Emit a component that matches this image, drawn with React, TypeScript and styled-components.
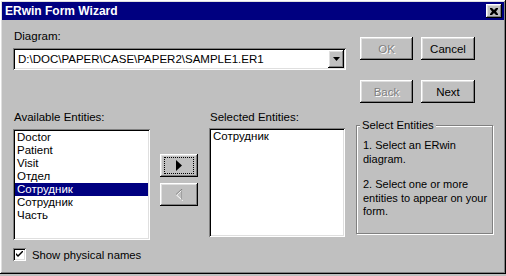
import React from 'react';
import styled, { createGlobalStyle, css } from 'styled-components';

const GlobalStyle = createGlobalStyle`
  html, body {
    margin: 0;
    padding: 0;
    background: #c0c0c0;
  }
  body {
    font-family: "Liberation Sans", Arial, sans-serif;
    font-size: 11px;
    color: #000;
  }
`;

const raised = css`
  box-shadow: inset -1px -1px #000, inset 1px 1px #fff, inset -2px -2px #808080,
    inset 2px 2px #dfdfdf;
`;

const sunken = css`
  box-shadow: inset 1px 1px #808080, inset -1px -1px #fff, inset 2px 2px #000,
    inset -2px -2px #dfdfdf;
`;

const Window = styled.div`
  width: 506px;
  height: 274px;
  box-sizing: border-box;
  background: #c0c0c0;
  padding: 2px;
  display: flex;
  flex-direction: column;
  ${raised};
`;

const TitleBar = styled.div`
  height: 18px;
  background: #000080;
  color: #fff;
  font-weight: bold;
  font-size: 12px;
  display: flex;
  align-items: center;
  justify-content: space-between;
  padding: 0 2px 0 3px;
`;

const CloseButton = styled.div`
  width: 16px;
  height: 14px;
  background: #c0c0c0;
  color: #000;
  display: flex;
  align-items: center;
  justify-content: center;
  ${raised};
`;

const Body = styled.div`
  flex: 1;
  padding: 0 0 0 11px;
  display: flex;
  flex-direction: column;
`;

const TopRow = styled.div`
  display: flex;
  gap: 14px;
`;

const DiagramBlock = styled.div`
  width: 333px;
  padding-top: 10px;
  display: flex;
  flex-direction: column;
`;

const Label = styled.div`
  height: 13px;
  line-height: 13px;
  font-size: 11.5px;
  margin-bottom: 5px;
  margin-left: 1px;
`;

const Combo = styled.div`
  height: 22px;
  background: #fff;
  display: flex;
  align-items: center;
  justify-content: space-between;
  padding: 0 2px 0 5px;
  box-sizing: border-box;
  font-size: 11.5px;
  ${sunken};
`;

const DropButton = styled.div`
  width: 16px;
  height: 18px;
  background: #c0c0c0;
  display: flex;
  align-items: center;
  justify-content: center;
  ${raised};
`;

const ButtonGrid = styled.div`
  display: grid;
  grid-template-columns: 53px 54px;
  grid-template-rows: 23px 23px;
  column-gap: 8px;
  row-gap: 20px;
  padding-top: 17px;
`;

const Button = styled.div<{ $disabled?: boolean }>`
  background: #c0c0c0;
  display: flex;
  align-items: center;
  justify-content: center;
  font-size: 11.5px;
  ${raised};
  color: ${(p) => (p.$disabled ? '#808080' : '#000')};
  text-shadow: ${(p) => (p.$disabled ? '1px 1px #fff' : 'none')};
`;

const MiddleRow = styled.div`
  display: grid;
  grid-template-columns: 137px 37px 136px 137px;
  column-gap: 11px;
  margin-top: 8px;
  align-items: start;
`;

const Column = styled.div`
  display: flex;
  flex-direction: column;
`;

const ListBox = styled.div<{ $height: number; $lift?: boolean }>`
  height: ${(p) => p.$height}px;
  margin-top: ${(p) => (p.$lift ? -1 : 0)}px;
  background: #fff;
  box-sizing: border-box;
  padding: 2px;
  ${sunken};
`;

const ListItem = styled.div<{ $selected?: boolean }>`
  height: 13px;
  line-height: 13px;
  padding-left: 2px;
  font-size: 11.5px;
  background: ${(p) => (p.$selected ? '#000080' : 'transparent')};
  color: ${(p) => (p.$selected ? '#fff' : '#000')};
`;

const ArrowColumn = styled.div`
  display: flex;
  flex-direction: column;
  gap: 6px;
  padding-top: 43px;
  margin-left: -1px;
`;

const ArrowButton = styled.div`
  height: 23px;
  background: #c0c0c0;
  display: flex;
  align-items: center;
  justify-content: center;
  position: relative;
  ${raised};
`;

const FocusRing = styled.div`
  position: absolute;
  inset: 3px 4px;
  border: 1px dotted #000;
`;

const GroupBox = styled.div`
  position: relative;
  height: 109px;
  margin-top: 14px;
  box-sizing: border-box;
  border: 1px solid #808080;
  box-shadow: inset 1px 1px #fff, 1px 1px #fff;
  padding: 13px 1px 0 6px;
  font-size: 11px;
  line-height: 13.5px;
`;

const GroupTitle = styled.div`
  position: absolute;
  top: -7px;
  left: 3px;
  padding: 0 2px;
  background: #c0c0c0;
  line-height: 13px;
  font-size: 11.3px;
`;

const Para = styled.p`
  margin: 0 0 12px 0;
`;

const CheckRow = styled.div`
  display: flex;
  align-items: center;
  gap: 6px;
  margin-top: 8px;
  font-size: 11.3px;
`;

const CheckBox = styled.div`
  width: 13px;
  height: 13px;
  background: #fff;
  box-sizing: border-box;
  display: flex;
  align-items: center;
  justify-content: center;
  ${sunken};
`;

const available = ['Doctor', 'Patient', 'Visit', 'Отдел', 'Сотрудник', 'Сотрудник', 'Часть'];

export default function App() {
  return (
    <>
      <GlobalStyle />
      <Window>
        <TitleBar>
          <span>ERwin Form Wizard</span>
          <CloseButton>
            <svg width="8" height="7" viewBox="0 0 8 7">
              <path d="M0 0h2l2 2 2-2h2v1L6 3.5 8 6v1H6L4 5 2 7H0V6l2-2.5L0 1z" fill="#000" />
            </svg>
          </CloseButton>
        </TitleBar>
        <Body>
          <TopRow>
            <DiagramBlock>
              <Label>Diagram:</Label>
              <Combo>
                <span>D:\DOC\PAPER\CASE\PAPER2\SAMPLE1.ER1</span>
                <DropButton>
                  <svg width="7" height="4" viewBox="0 0 7 4">
                    <path d="M0 0h7L3.5 4z" fill="#000" />
                  </svg>
                </DropButton>
              </Combo>
            </DiagramBlock>
            <ButtonGrid>
              <Button $disabled>OK</Button>
              <Button>Cancel</Button>
              <Button $disabled>Back</Button>
              <Button>Next</Button>
            </ButtonGrid>
          </TopRow>
          <MiddleRow>
            <Column>
              <Label>Available Entities:</Label>
              <ListBox $height={111}>
                {available.map((name, i) => (
                  <ListItem key={i} $selected={i === 4}>
                    {name}
                  </ListItem>
                ))}
              </ListBox>
            </Column>
            <ArrowColumn>
              <ArrowButton>
                <FocusRing />
                <svg width="6" height="11" viewBox="0 0 6 11">
                  <path d="M0 0l6 5.5L0 11z" fill="#000" />
                </svg>
              </ArrowButton>
              <ArrowButton>
                <svg width="7" height="12" viewBox="0 0 7 12">
                  <path d="M6 0L0 5.5 6 11z" fill="none" stroke="#fff" strokeWidth="1" transform="translate(0.5 0.5)" />
                  <path d="M6 0L0 5.5" fill="none" stroke="#808080" strokeWidth="1" />
                  <path d="M6 0v11" fill="none" stroke="#808080" strokeWidth="1" />
                </svg>
              </ArrowButton>
            </ArrowColumn>
            <Column>
              <Label>Selected Entities:</Label>
              <ListBox $height={109} $lift>
                <ListItem>Сотрудник</ListItem>
              </ListBox>
            </Column>
            <GroupBox>
              <GroupTitle>Select Entities</GroupTitle>
              <Para>1. Select an ERwin diagram.</Para>
              <Para>2. Select one or more entities to appear on your form.</Para>
            </GroupBox>
          </MiddleRow>
          <CheckRow>
            <CheckBox>
              <svg width="7" height="7" viewBox="0 0 7 7">
                <path d="M0 2l2 2 5-5v2L2 6 0 4z" fill="#000" />
              </svg>
            </CheckBox>
            <span>Show physical names</span>
          </CheckRow>
        </Body>
      </Window>
    </>
  );
}
